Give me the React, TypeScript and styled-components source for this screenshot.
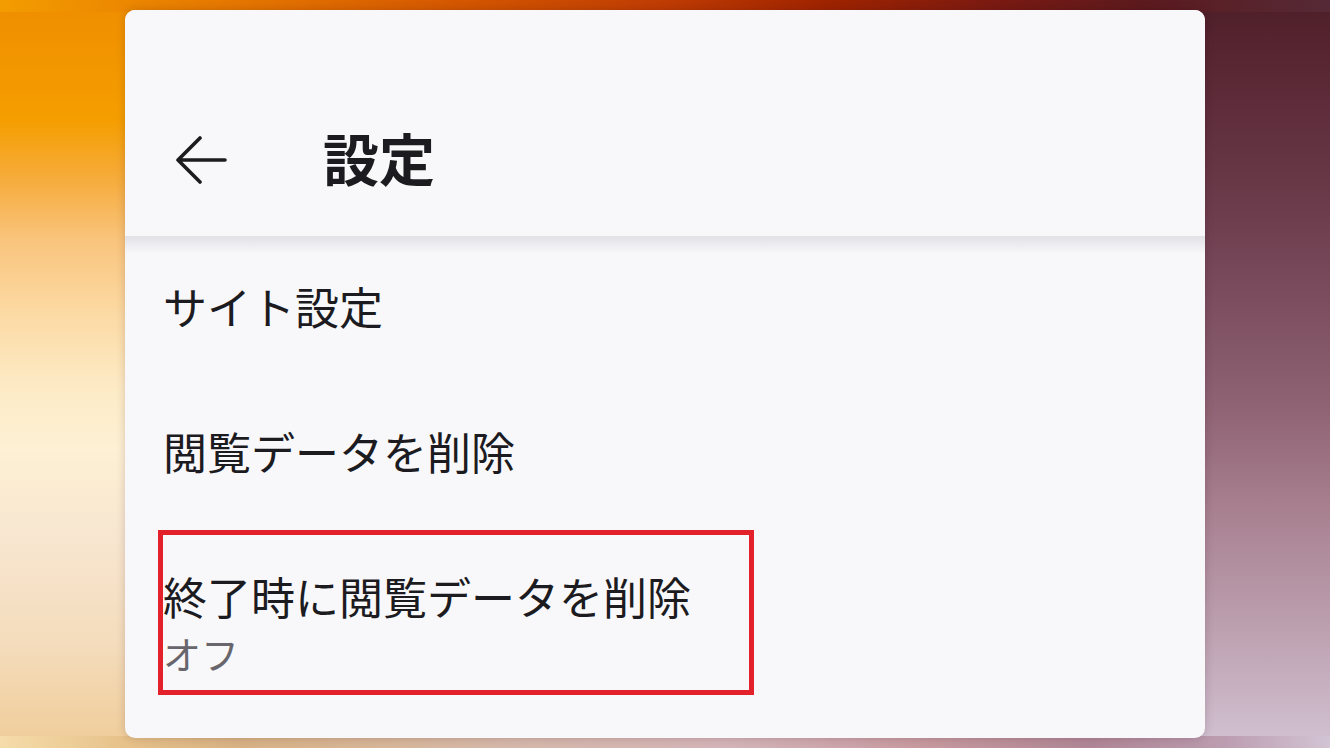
import React from "react";
import styled, { createGlobalStyle } from "styled-components";

const Global = createGlobalStyle`
  html, body { margin: 0; padding: 0; height: 100%; }
  #root { height: 100%; }
  body { font-family: "Noto Sans CJK JP", "Noto Sans", sans-serif; }
`;

const Page = styled.div`
  box-sizing: border-box;
  height: 748px;
  width: 100%;
  padding: 10px 0;
  display: flex;
  justify-content: center;
  overflow: hidden;
  background:
    linear-gradient(90deg, #f39c00 0%, #e87c00 15%, #d85c00 32%, #c03c04 50%, #a02400 62%, #7a1a12 75%, #5c1a1e 86%, #552a36 100%) top / 100% 12px no-repeat,
    linear-gradient(90deg, #f5dcaa 0%, #e6c088 10%, #d8b284 18%, #d6b8aa 38%, #d4b4b8 55%, #c6989e 70%, #b08696 82%, #bc9cb0 92%, #d2c4d4 100%) bottom / 100% 12px no-repeat,
    linear-gradient(180deg, #ef8e00 0%, #f59e00 16%, #f6ac3c 24%, #f9c47c 32%, #fcdaa4 42%, #fdebc6 52%, #fdf0d4 60%, #f8e6d0 72%, #f4dcbc 86%, #f0cc98 100%) left / 50% 100% no-repeat,
    linear-gradient(180deg, #4e1e28 0%, #5e2c3a 14%, #6c3c4c 28%, #7e5062 42%, #906474 55%, #a88090 68%, #ba9cac 82%, #d2c2d2 100%) right / 50% 100% no-repeat;
`;

const Card = styled.div`
  width: 1080px;
  height: 728px;
  background: #f8f8fa;
  border-radius: 10px;
  overflow: hidden;
  display: flex;
  flex-direction: column;
  box-shadow: 0 0 10px rgba(40, 10, 20, 0.18);
`;

const Header = styled.header`
  position: relative;
  z-index: 1;
  height: 226px;
  flex: none;
  box-sizing: border-box;
  padding: 0 0 46px 50px;
  display: flex;
  align-items: flex-end;
  background: #f8f8fa;
  &::after {
    content: "";
    position: absolute;
    left: 0;
    right: 0;
    top: 100%;
    height: 18px;
    background: linear-gradient(180deg, #e2e2e6 0%, #ececf0 45%, rgba(248, 248, 250, 0) 100%);
  }
`;

const HeaderRow = styled.div`
  height: 60px;
  display: flex;
  align-items: center;
  gap: 96px;
`;

const BackButton = styled.button`
  border: none;
  background: none;
  padding: 0;
  margin: 0;
  width: 52px;
  height: 48px;
  display: flex;
  color: #1c1b1f;
`;

const Title = styled.h1`
  margin: 0;
  font-size: 56px;
  font-weight: 700;
  line-height: 60px;
  color: #1c1b1f;
  transform: translateY(-3px);
`;

const List = styled.div`
  display: flex;
  flex-direction: column;
  padding-left: 38px;
`;

const Item = styled.div`
  height: 145px;
  box-sizing: border-box;
  padding-bottom: 5px;
  display: flex;
  flex-direction: column;
  justify-content: center;
`;

const Highlight = styled.div`
  box-sizing: border-box;
  width: 596px;
  height: 165px;
  margin: 4px 0 0 -5px;
  border: 5px solid #e3212b;
  padding: 33px 0 0 0;
  display: flex;
  flex-direction: column;
`;

const ItemTitle = styled.div`
  font-size: 44px;
  line-height: 57px;
  color: #1c1b1f;
  white-space: nowrap;
`;

const ItemSub = styled.div`
  font-size: 38px;
  line-height: 48px;
  margin-top: 4px;
  color: #68666c;
`;

const ArrowIcon = () => (
  <svg width="52" height="48" viewBox="0 0 52 48" fill="none">
    <path
      d="M3 24 H50 M25 2 L3 24 L25 46"
      stroke="currentColor"
      strokeWidth="3.6"
      strokeLinecap="round"
      strokeLinejoin="round"
    />
  </svg>
);

export default function App() {
  return (
    <>
      <Global />
      <Page>
        <Card>
          <Header>
            <HeaderRow>
              <BackButton aria-label="戻る">
                <ArrowIcon />
              </BackButton>
              <Title>設定</Title>
            </HeaderRow>
          </Header>
          <List>
            <Item>
              <ItemTitle>サイト設定</ItemTitle>
            </Item>
            <Item>
              <ItemTitle>閲覧データを削除</ItemTitle>
            </Item>
            <Highlight>
              <ItemTitle>終了時に閲覧データを削除</ItemTitle>
              <ItemSub>オフ</ItemSub>
            </Highlight>
          </List>
        </Card>
      </Page>
    </>
  );
}
